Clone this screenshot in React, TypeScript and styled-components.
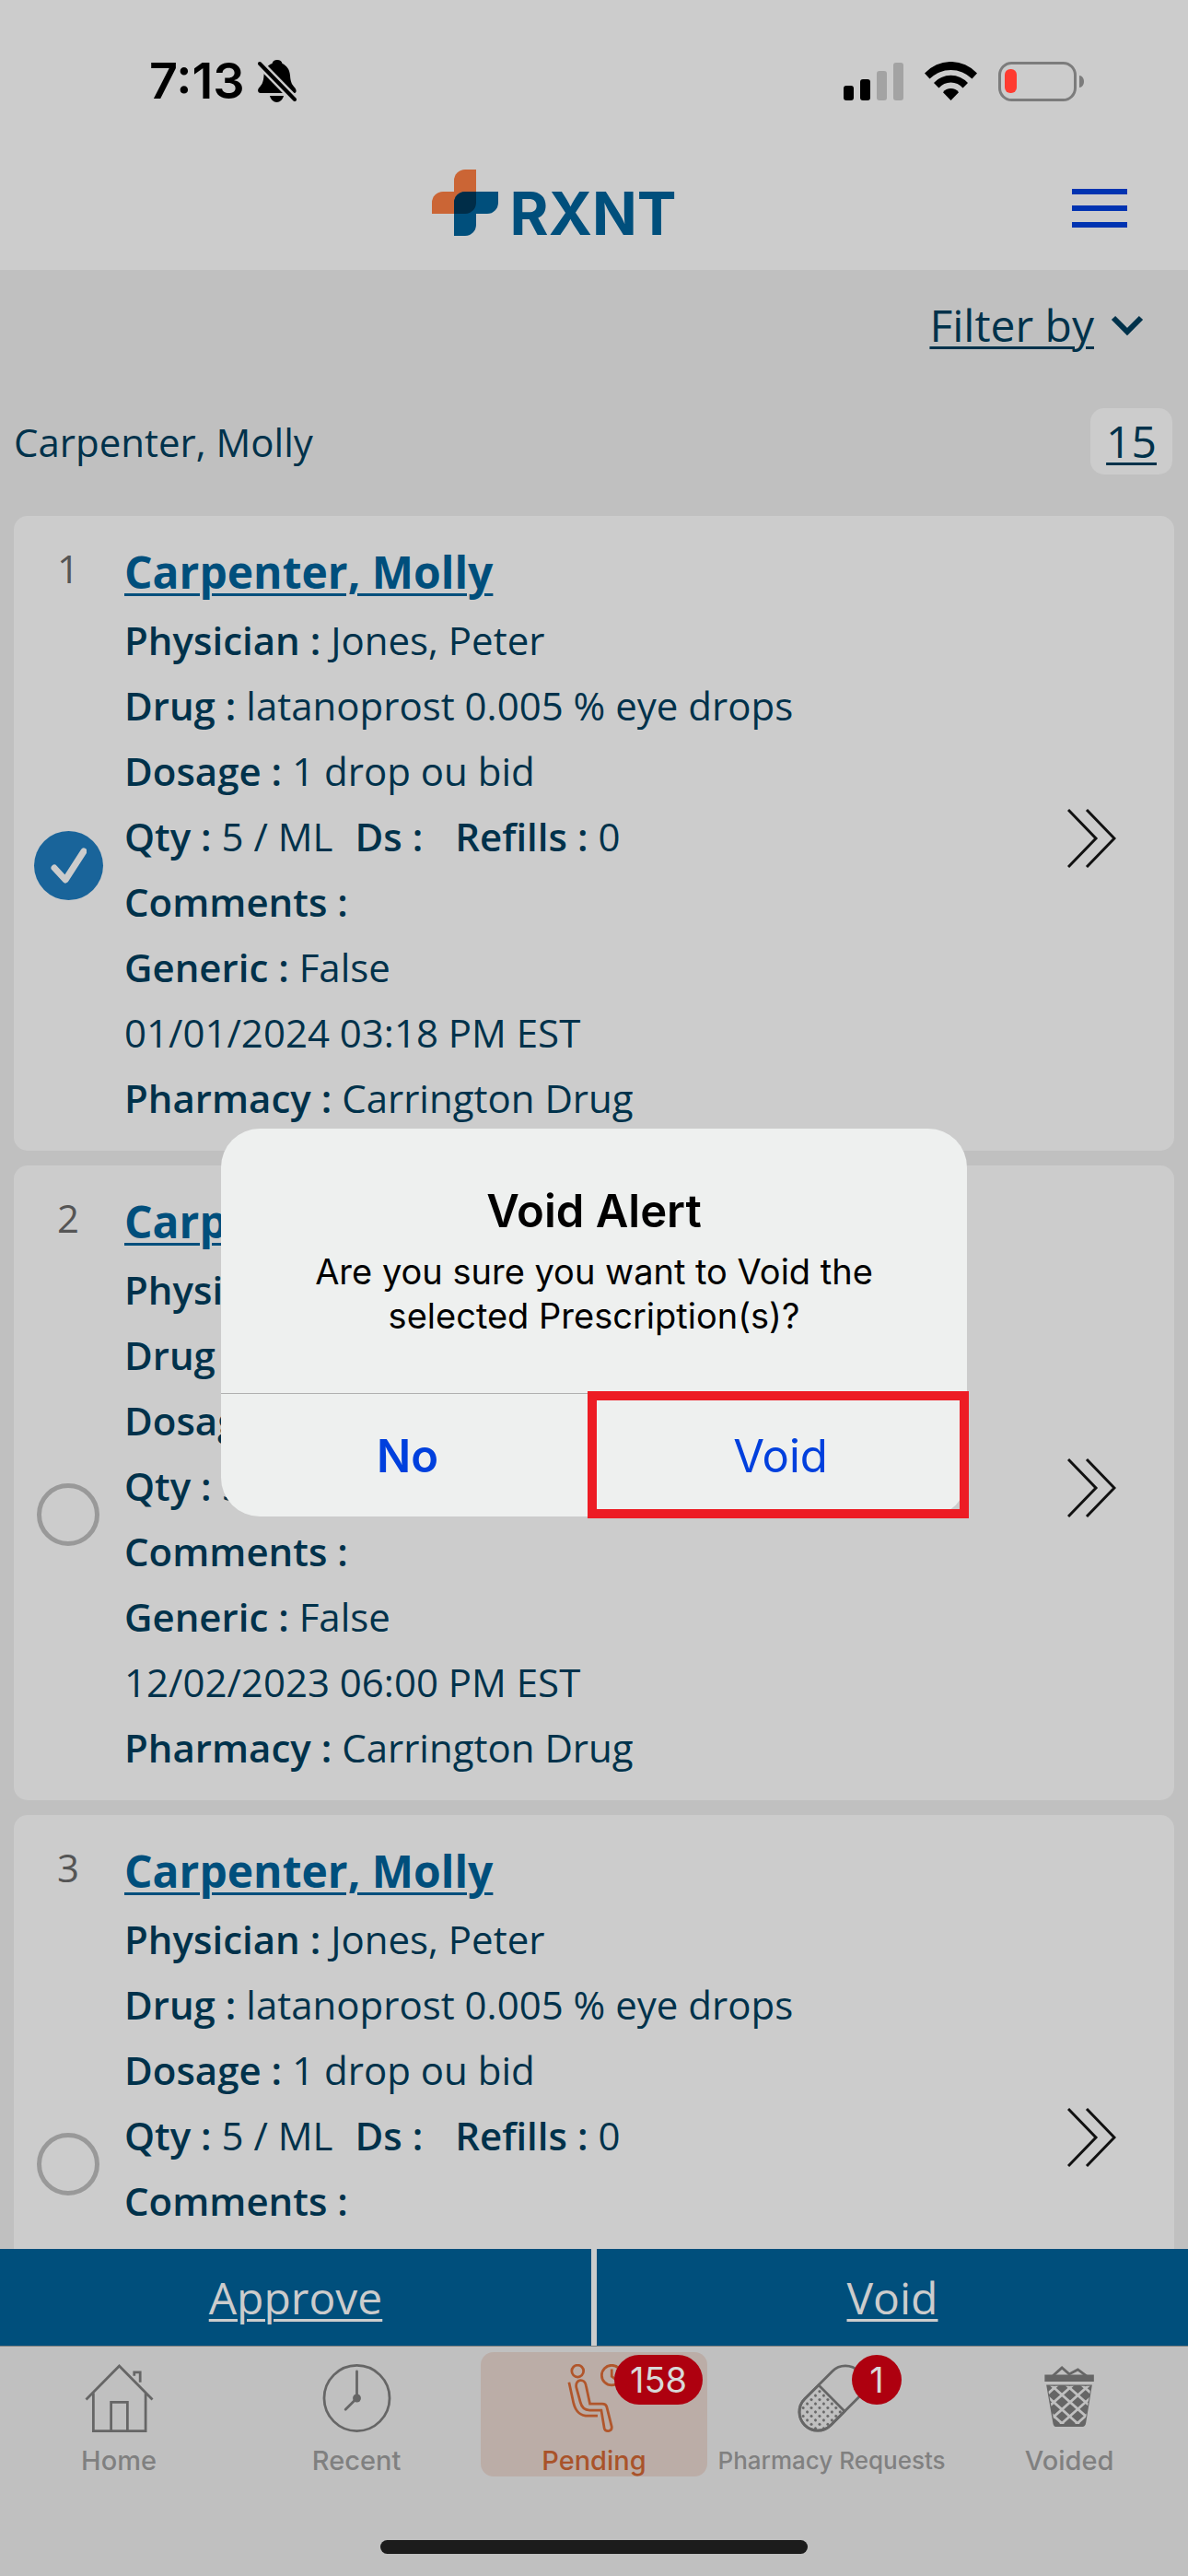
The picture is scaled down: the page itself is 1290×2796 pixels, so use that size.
import React, { useState } from "react";
import styled, { createGlobalStyle, css } from "styled-components";

const color = {
  surface: "#cccccc",
  page: "#c0c0c0",
  navy: "#00324b",
  brand: "#004f7c",
  orange: "#b1562b",
  grey: "#666666",
  label: "#808080",
  badge: "#ae000f",
  action: "#0040dd",
};

const body = `"Open Sans", "Noto Sans", sans-serif`;
const system = `Inter, Roboto, sans-serif`;

const GlobalStyle = createGlobalStyle`
  *, *::before, *::after { box-sizing: border-box; }
  body { margin: 0; background: ${color.page}; }
  button, input { font: inherit; color: inherit; margin: 0; padding: 0; border: 0; background: none; }
  h1, h2, p, dl, dd, dt, ul { margin: 0; padding: 0; }
`;

const Screen = styled.div`
  display: flex;
  flex-direction: column;
  height: 100vh;
  overflow: hidden;
  background: ${color.page};
  color: ${color.navy};
  font-family: ${body};
  font-size: 42px;
  line-height: 71px;
`;

/* ---------- top ---------- */

const StatusBar = styled.div`
  display: flex;
  align-items: center;
  justify-content: space-between;
  height: 176px;
  flex: none;
  padding: 0 112px 0 162px;
  background: ${color.surface};
  color: #000;
  font-family: ${system};
`;

const StatusGroup = styled.div<{ $gap: number }>`
  display: flex;
  align-items: center;
  gap: ${(p) => p.$gap}px;
`;

const Time = styled.span`
  font-size: 54px;
  font-weight: 600;
  line-height: 64px;
`;

const Header = styled.header`
  display: flex;
  align-items: center;
  flex: none;
  height: 117px;
  padding: 0 66px 18px 39px;
  background: ${color.surface};
`;

const Logo = styled.a`
  display: flex;
  align-items: flex-end;
  gap: 12px;
  margin: 0 auto;
  padding-bottom: 12px;
  color: ${color.brand};
  text-decoration: none;
`;

const LogoText = styled.span`
  font-family: ${system};
  font-size: 64px;
  font-weight: 700;
  line-height: 48px;
`;

const MenuButton = styled.button`
  display: grid;
  gap: 12px;
  width: 60px;

  span {
    height: 6px;
    background: #0033b1;
  }
`;

/* ---------- list ---------- */

const List = styled.main`
  flex: 1;
  min-height: 0;
  overflow: hidden auto;
  scrollbar-width: none;
  padding: 24px 15px 0;
`;

const underline = css`
  text-decoration: underline;
  text-decoration-thickness: 3px;
  text-underline-offset: 5px;
`;

const FilterRow = styled.div`
  display: flex;
  justify-content: flex-end;
  padding-right: 33px;
  margin-bottom: 55px;
`;

const FilterButton = styled.button`
  display: flex;
  align-items: center;
  gap: 18px;
  font-size: 48px;

  span {
    ${underline}
  }
`;

const PatientRow = styled.div`
  display: flex;
  align-items: center;
  justify-content: space-between;
  padding-right: 2px;
  margin-bottom: 45px;
`;

const Count = styled.a`
  padding: 0 17px;
  border-radius: 15px;
  background: ${color.surface};
  color: inherit;
  font-size: 48px;
  line-height: 72px;
  ${underline}
`;

const Cards = styled.ul`
  display: grid;
  gap: 16px;
  list-style: none;
`;

const Card = styled.li`
  display: grid;
  grid-template-columns: 120px 1fr auto;
  padding: 23px 63px 22px 0;
  border-radius: 15px;
  background: ${color.surface};
`;

const Side = styled.div`
  display: flex;
  flex-direction: column;
  align-items: center;
  padding-right: 2px;
`;

const Index = styled.span`
  color: #555;
  line-height: 68px;
`;

const Tick = styled.label`
  display: grid;
  place-items: center;
  margin: auto 0;
  width: 76px;
  height: 76px;

  > * {
    grid-area: 1 / 1;
  }

  input {
    appearance: none;
    width: 68px;
    height: 68px;
    border: 5px solid #999;
    border-radius: 50%;
  }

  input:checked {
    width: 75px;
    height: 75px;
    border: 0;
    background: #19649a;
  }

  svg {
    pointer-events: none;
  }
`;

const PatientLink = styled.a`
  display: inline-block;
  margin-top: 2px;
  margin-bottom: 2px;
  color: ${color.brand};
  font-size: 48px;
  font-weight: 700;
  line-height: 72px;
  vertical-align: top;
  ${underline}
`;

const Line = styled.div`
  display: flex;
  gap: 24px;
  min-height: 71px;
`;

const Pair = styled.div`
  display: flex;
  gap: 11px;

  dt {
    font-weight: 600;
  }
`;

const OpenButton = styled.button`
  align-self: center;
  display: flex;
  padding-top: 10px;
`;

/* ---------- bottom ---------- */

const ActionBar = styled.div`
  display: grid;
  grid-template-columns: 1fr 1fr;
  gap: 6px;
  flex: none;
  background: ${color.surface};
  border-bottom: 1px solid #808080;
`;

const ActionButton = styled.button`
  height: 105px;
  background: ${color.brand};
  color: ${color.surface};
  font-size: 48px;
  ${underline}
`;

const TabBar = styled.nav`
  display: grid;
  grid-template-columns: repeat(5, minmax(0, 1fr));
  flex: none;
  padding-top: 6px;
  font-family: ${system};
`;

const Tab = styled.a<{ $active?: boolean }>`
  position: relative;
  display: flex;
  flex-direction: column;
  align-items: center;
  gap: 14px;
  height: 135px;
  margin: 0 6px;
  padding-top: 13px;
  border-radius: 14px;
  background: ${(p) => (p.$active ? "#bbada7" : "transparent")};
  color: ${(p) => (p.$active ? "#a9532a" : color.label)};
  text-decoration: none;
`;

const TabLabel = styled.span<{ $compact?: boolean }>`
  font-size: ${(p) => (p.$compact ? 26 : 29)}px;
  font-weight: 500;
  line-height: 34px;
  white-space: nowrap;
`;

const Badge = styled.span`
  position: absolute;
  top: 3px;
  left: calc(50% + 22px);
  min-width: 54px;
  padding: 0 17px;
  border-radius: 27px;
  background: ${color.badge};
  color: #d8d8d8;
  font-size: 38px;
  line-height: 54px;
  text-align: center;
`;

const HomeIndicator = styled.div`
  flex: none;
  width: 36%;
  height: 15px;
  margin: 69px auto 24px;
  border-radius: 8px;
  background: #1c1c1c;
`;

/* ---------- dialog ---------- */

const Overlay = styled.div`
  position: fixed;
  inset: 0;
  display: grid;
  place-items: center;
  padding: 177px 24px 102px;
`;

const Dialog = styled.div`
  width: 100%;
  max-width: 810px;
  border-radius: 42px;
  background: #eef0ef;
  color: #000;
  font-family: ${system};
  text-align: center;
`;

const DialogBody = styled.div`
  padding: 58px 48px 60px;
  border-bottom: 1px solid #b0b0b0;
`;

const DialogTitle = styled.h2`
  font-size: 49px;
  font-weight: 600;
  line-height: 64px;
  margin-bottom: 9px;
`;

const DialogText = styled.p`
  max-width: 650px;
  margin: 0 auto;
  font-size: 38px;
  line-height: 48px;
`;

const DialogActions = styled.div`
  display: grid;
  grid-template-columns: 1fr 1fr;
`;

const DialogButton = styled.button<{ $strong?: boolean; $framed?: boolean }>`
  position: relative;
  height: 133px;
  padding-top: 2px;
  color: ${color.action};
  font-size: 49px;
  font-weight: ${(p) => (p.$strong ? 600 : 400)};
  line-height: 64px;

  ${(p) =>
    p.$framed &&
    css`
      &::after {
        content: "";
        position: absolute;
        inset: -3px -2px -2px -7px;
        border: 10px solid #ed1c24;
      }
    `}
`;

/* ---------- icons ---------- */

const BellOff = () => (
  <svg width="42" height="46" viewBox="0 0 42 46" aria-hidden="true">
    <path d="M21 0c-3 0-5 1.500-5.500 4C10 6 7 10 6.500 17 6 25 4 27 1.500 30-1 33 0 36 3 36h36c3 0 3.500-3 1-6-2.500-3-4.500-5-5-13-.5-7-4-11-8.500-13C26 1.500 24 0 21 0Z" />
    <path d="M13 39h15c-1 4-4 7-7.500 7S14 43 13 39Z" />
    <path d="M1 3 41 44" stroke={color.surface} strokeWidth="9" />
    <path d="M2 4 40 43" stroke="#000" strokeWidth="4" strokeLinecap="round" />
  </svg>
);

const Signal = () => (
  <svg width="65" height="42" viewBox="0 0 65 42" aria-hidden="true">
    <rect x="0" y="26" width="11" height="16" rx="3" />
    <rect x="18" y="19" width="11" height="23" rx="3" />
    <rect x="36" y="10" width="11" height="32" rx="3" fill="#a3a3a3" />
    <rect x="54" y="1" width="11" height="41" rx="3" fill="#a3a3a3" />
  </svg>
);

const Wifi = () => (
  <svg width="57" height="42" viewBox="0 0 57 42" aria-hidden="true">
    <path d="M0 12.500A38.700 38.700 0 0 1 57 12.500L51.500 18.500A32.600 32.600 0 0 0 5.500 18.500Z" />
    <path d="M10 23A24.800 24.800 0 0 1 47 23L41.500 28.500A17 17 0 0 0 15.500 28.500Z" />
    <path d="M20 33.300A10.500 10.500 0 0 1 37 33.300L28.500 42Z" />
  </svg>
);

const Battery = () => (
  <svg width="94" height="43" viewBox="0 0 94 43" fill="none" aria-hidden="true">
    <rect x="1.500" y="1.500" width="82" height="40" rx="13" stroke="#7c7c7c" strokeWidth="3" />
    <rect x="7" y="8" width="13" height="26" rx="6" fill="#ff3b30" />
    <path d="M88 15c3 0 5 3 5 6.500s-2 6.500-5 6.500Z" fill="#7c7c7c" />
  </svg>
);

const LogoMark = () => (
  <svg width="73" height="72" viewBox="0 0 73 72" aria-hidden="true">
    <path d="M36 0h12v24H24V12A12 12 0 0 1 36 0Z" fill="#cb6535" />
    <path d="M12 24h36v12a12 12 0 0 1-12 12H0V36a12 12 0 0 1 12-12Z" fill="#cb6535" />
    <path d="M36 24h36v12a12 12 0 0 1-12 12H48v12a12 12 0 0 1-12 12H24V36a12 12 0 0 1 12-12Z" fill={color.brand} />
    <path d="M36 24h12v12a12 12 0 0 1-12 12H24V36a12 12 0 0 1 12-12Z" fill="#002d48" />
  </svg>
);

const ChevronDown = () => (
  <svg width="36" height="22" viewBox="0 0 36 22" fill="none" aria-hidden="true">
    <path d="M3 3 18 18 33 3" stroke={color.navy} strokeWidth="6" />
  </svg>
);

const DoubleChevron = () => (
  <svg width="53" height="64" viewBox="0 0 53 64" fill="none" stroke="#111" strokeWidth="3" aria-hidden="true">
    <path d="M1 1 31 32 1 63" />
    <path d="M21 1 51 32 21 63" />
  </svg>
);

const CheckMark = () => (
  <svg width="40" height="40" viewBox="0 0 40 40" fill="none" aria-hidden="true">
    <path d="M5 23 17 36 37 5" stroke={color.surface} strokeWidth="7" strokeLinecap="round" strokeLinejoin="round" />
  </svg>
);

const TabSvg = ({ stroke = color.grey, children }: { stroke?: string; children: React.ReactNode }) => (
  <svg width="75" height="75" viewBox="0 0 75 75" fill="none" stroke={stroke} strokeWidth="2.8" aria-hidden="true">
    {children}
  </svg>
);

const HomeIcon = () => (
  <TabSvg>
    <path d="M1 39 37.500 2 74 39M9 32v41.500h57.500V32M28.500 73V42h18v31M54 13V9h6.500v11" />
  </TabSvg>
);

const RecentIcon = () => (
  <TabSvg>
    <circle cx="37.500" cy="37.500" r="36" />
    <path d="M37.500 8v29.500L25 50" strokeLinecap="round" />
    <circle cx="37.500" cy="37.500" r="4.500" fill={color.grey} stroke="none" />
  </TabSvg>
);

const PendingIcon = () => (
  <TabSvg stroke={color.orange}>
    <circle cx="19" cy="7.700" r="6.500" />
    <circle cx="56.500" cy="12.300" r="11" />
    <path d="M56.500 5.500v8l4 3" />
    <path d="M9.500 20 14.500 43C17 53 22 57 31 57H41" />
    <path d="M17.500 25.500C16 16 27 15 28.300 24L32.500 43.700H46C49 43.700 50.500 45 51 47L56.500 69C57 74.500 49.500 75 48.300 70.500L45 50.700H32C27 50.700 23.500 48 22 42Z" />
  </TabSvg>
);

const PillIcon = () => (
  <TabSvg>
    <defs>
      <pattern id="pill-dots" width="6.400" height="6.400" patternUnits="userSpaceOnUse">
        <circle cx="3.200" cy="3.200" r="1.600" fill={color.grey} stroke="none" />
      </pattern>
    </defs>
    <g transform="rotate(45 37 37.500)">
      <path d="M16.700 37.500h40.600v21.500a20.300 20.300 0 0 1-40.600 0Z" fill="url(#pill-dots)" />
      <rect x="16.700" y="-4.300" width="40.600" height="83.600" rx="20.300" />
    </g>
  </TabSvg>
);

const latticeStarts = [-40, -23, -6, 12, 29, 46, 64, 81, 98, 115];

const TrashIcon = () => (
  <TabSvg>
    <defs>
      <clipPath id="basket">
        <path d="M13 24H61L54 66H21Z" />
      </clipPath>
    </defs>
    <path d="M19 13 29 4 37 11 46.500 6 56 13" />
    <path d="M10 11.700h54.200v7.600H10Z" fill={color.grey} stroke="none" />
    <path d="M11.800 22.700H62.200L55.500 64C55 68 53 69 50 69H24C21 69 19.500 68 19 64Z" fill={color.grey} stroke="none" />
    <g clipPath="url(#basket)" stroke={color.page} strokeWidth="2.800">
      {latticeStarts.map((x) => (
        <path key={x} d={`M${x} 18.600l61 54.600M${x} 18.600l-61 54.600`} />
      ))}
    </g>
  </TabSvg>
);

/* ---------- data ---------- */

interface Prescription {
  id: number;
  date?: string;
}

const prescriptions: Prescription[] = [
  { id: 1, date: "01/01/2024 03:18 PM EST" },
  { id: 2, date: "12/02/2023 06:00 PM EST" },
  { id: 3 },
];

const tabs = [
  { name: "Home", icon: <HomeIcon /> },
  { name: "Recent", icon: <RecentIcon /> },
  { name: "Pending", icon: <PendingIcon />, badge: 158, active: true },
  { name: "Pharmacy Requests", icon: <PillIcon />, badge: 1, compact: true },
  { name: "Voided", icon: <TrashIcon /> },
];

const Field = ({ name, value }: { name: string; value?: string }) => (
  <Pair>
    <dt>{name} :</dt>
    <dd>{value}</dd>
  </Pair>
);

const PrescriptionCard = ({ id, date }: Prescription) => {
  const [checked, setChecked] = useState(id === 1);
  return (
    <Card>
      <Side>
        <Index>{id}</Index>
        <Tick>
          <input
            type="checkbox"
            aria-label={`Select prescription ${id}`}
            checked={checked}
            onChange={() => setChecked(!checked)}
          />
          {checked && <CheckMark />}
        </Tick>
      </Side>
      <div>
        <PatientLink href="#patient">Carpenter, Molly</PatientLink>
        <dl>
          <Line><Field name="Physician" value="Jones, Peter" /></Line>
          <Line><Field name="Drug" value="latanoprost 0.005 % eye drops" /></Line>
          <Line><Field name="Dosage" value="1 drop ou bid" /></Line>
          <Line>
            <Field name="Qty" value="5 / ML" />
            <Field name="Ds" />
            <Field name="Refills" value="0" />
          </Line>
          <Line><Field name="Comments" /></Line>
          <Line><Field name="Generic" value="False" /></Line>
          <Line>{date}</Line>
          <Line><Field name="Pharmacy" value="Carrington Drug" /></Line>
        </dl>
      </div>
      <OpenButton type="button" aria-label={`Open prescription ${id}`}>
        <DoubleChevron />
      </OpenButton>
    </Card>
  );
};

export default function App() {
  return (
    <>
      <GlobalStyle />
      <Screen>
        <StatusBar>
          <StatusGroup $gap={14}>
            <Time>7:13</Time>
            <BellOff />
          </StatusGroup>
          <StatusGroup $gap={23}>
            <Signal />
            <Wifi />
            <Battery />
          </StatusGroup>
        </StatusBar>
        <Header>
          <Logo href="#home">
            <LogoMark />
            <LogoText>RXNT</LogoText>
          </Logo>
          <MenuButton type="button" aria-label="Menu">
            <span />
            <span />
            <span />
          </MenuButton>
        </Header>

        <List>
          <FilterRow>
            <FilterButton type="button">
              <span>Filter by</span>
              <ChevronDown />
            </FilterButton>
          </FilterRow>
          <PatientRow>
            <p>Carpenter, Molly</p>
            <Count href="#count">15</Count>
          </PatientRow>
          <Cards>
            {prescriptions.map((p) => (
              <PrescriptionCard key={p.id} {...p} />
            ))}
          </Cards>
        </List>

        <ActionBar>
          <ActionButton type="button">Approve</ActionButton>
          <ActionButton type="button">Void</ActionButton>
        </ActionBar>
        <TabBar>
          {tabs.map((tab) => (
            <Tab key={tab.name} href={`#${tab.name.toLowerCase().replace(" ", "-")}`} $active={tab.active}>
              {tab.icon}
              <TabLabel $compact={tab.compact}>{tab.name}</TabLabel>
              {tab.badge && <Badge>{tab.badge}</Badge>}
            </Tab>
          ))}
        </TabBar>
        <HomeIndicator />
      </Screen>

      <Overlay>
        <Dialog role="alertdialog" aria-labelledby="void-title" aria-describedby="void-text">
          <DialogBody>
            <DialogTitle id="void-title">Void Alert</DialogTitle>
            <DialogText id="void-text">Are you sure you want to Void the selected Prescription(s)?</DialogText>
          </DialogBody>
          <DialogActions>
            <DialogButton type="button" $strong>No</DialogButton>
            <DialogButton type="button" $framed>Void</DialogButton>
          </DialogActions>
        </Dialog>
      </Overlay>
    </>
  );
}
